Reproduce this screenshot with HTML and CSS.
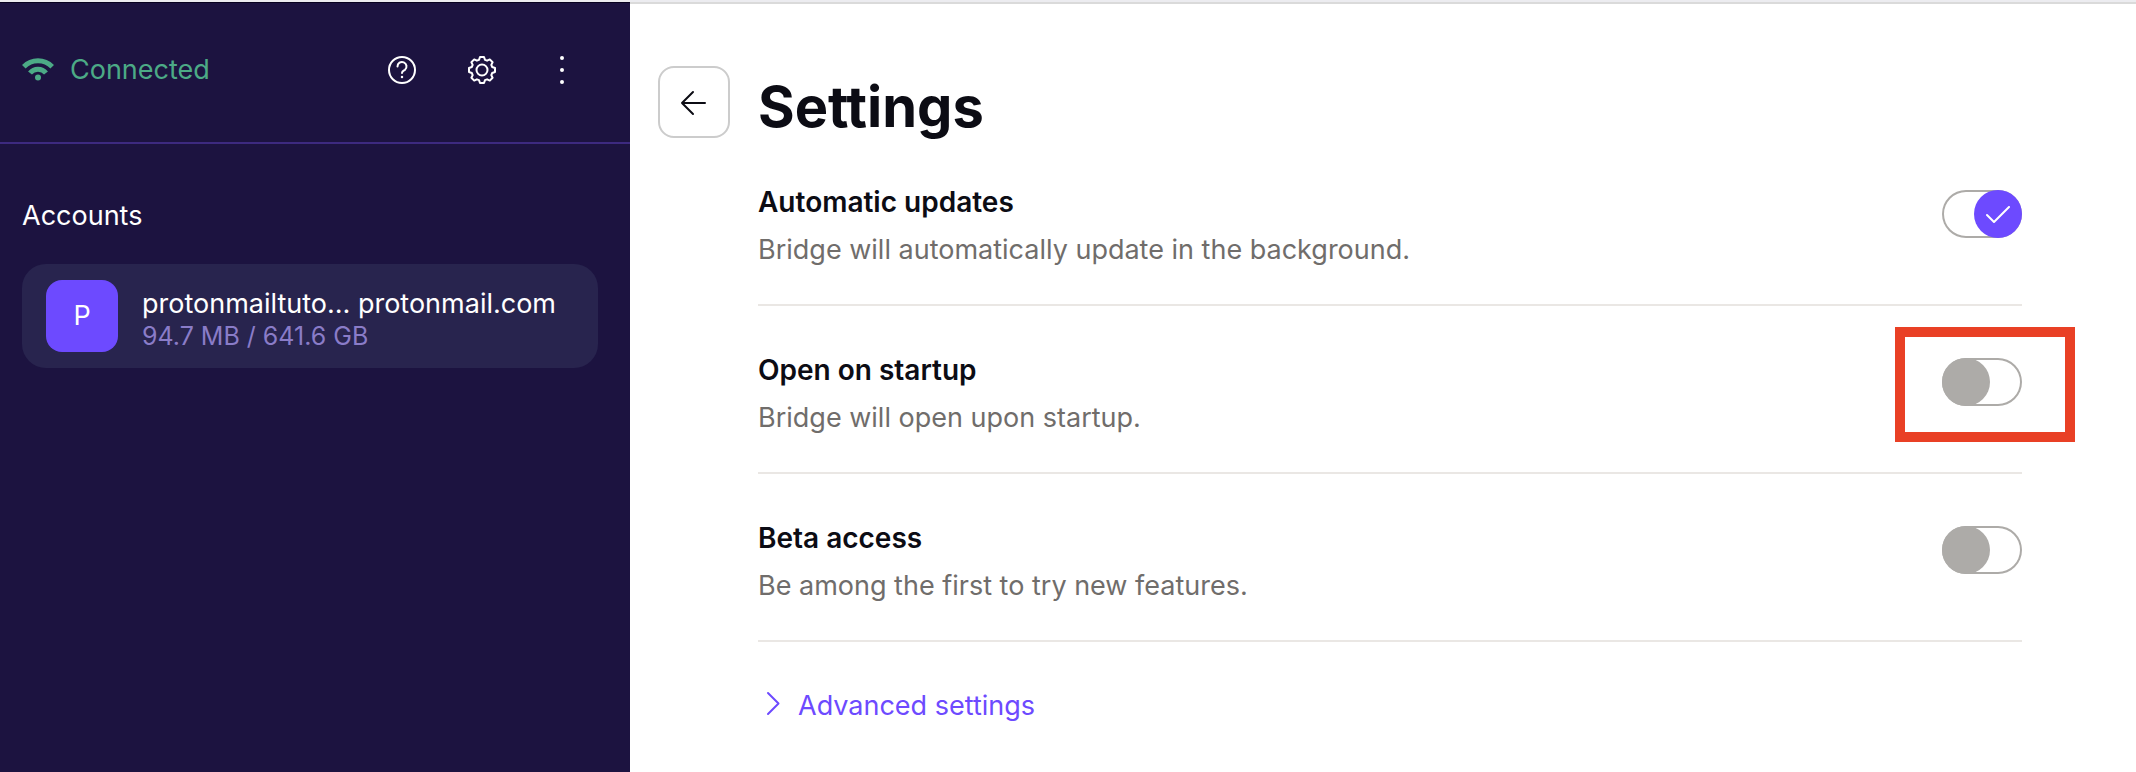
FILE: index.html
```
<!DOCTYPE html>
<html lang="en">
<head>
    <meta charset="UTF-8">
    <meta name="viewport" content="width=device-width, initial-scale=1.0">
    <title>Bridge Settings</title>
    <link rel="stylesheet" href="styles.css">
</head>
<body>
    <aside class="sidebar">
        <header class="status-bar">
            <svg class="wifi" viewBox="0 0 32 24" aria-hidden="true">
                <path d="M1.800 8.700a20 20 0 0 1 28.400 0" stroke-width="5"/>
                <path d="M8 15a10.300 10.300 0 0 1 16 0" stroke-width="5"/>
                <circle cx="16" cy="19.600" r="3"/>
            </svg>
            <span class="status">Connected</span>
            <nav class="actions">
                <button class="icon-button" type="button" aria-label="Help">
                    <svg viewBox="0 0 32 32">
                        <circle cx="16" cy="16" r="13"/>
                        <path d="M11.500 12.500a4.500 4.500 0 1 1 7.500 3.300c-1.800 1.200-3 1.500-3 3.200"/>
                        <path d="M16 23v.01" stroke-width="2.500"/>
                    </svg>
                </button>
                <button class="icon-button" type="button" aria-label="Settings">
                    <svg viewBox="0 0 32 32">
                        <circle cx="16" cy="16" r="5.500"/>
                        <path d="M13 5.800L14 3h4l1 2.800 2.100.9 2.700-1.300 2.800 2.800-1.300 2.700.9 2.100 2.800 1v4l-2.800 1-.9 2.100 1.300 2.700-2.800 2.800-2.700-1.300-2.100.9-1 2.800h-4l-1-2.800-2.100-.9-2.700 1.300-2.800-2.800 1.300-2.700-.9-2.100-2.800-1v-4l2.800-1 .9-2.100-1.300-2.700 2.800-2.800 2.700 1.300z"/>
                    </svg>
                </button>
                <button class="icon-button" type="button" aria-label="More">
                    <svg viewBox="0 0 32 32">
                        <path d="M16 4v.01M16 16v.01M16 28v.01" stroke-width="4"/>
                    </svg>
                </button>
            </nav>
        </header>
        <h2 class="accounts-title">Accounts</h2>
        <button class="account" type="button">
            <span class="avatar">P</span>
            <span class="account-info">
                <span class="account-name">protonmailtuto… protonmail.com</span>
                <span class="account-usage">94.7 MB / 641.6 GB</span>
            </span>
        </button>
    </aside>
    <main class="content">
        <button class="back" type="button" aria-label="Back">
            <svg viewBox="0 0 32 32"><path d="M27 17H4M15 6L4 17l11 11"/></svg>
        </button>
        <div class="settings">
            <h1 class="title">Settings</h1>
            <div class="setting">
                <label class="setting-text" for="updates">
                    <span class="setting-name">Automatic updates</span>
                    <span class="setting-desc">Bridge will automatically update in the background.</span>
                </label>
                <div class="toggle">
                    <input type="checkbox" id="updates" class="toggle-input" checked>
                    <svg class="check" viewBox="0 0 24 18" aria-hidden="true"><path d="M1 9l7 7L23 1"/></svg>
                </div>
            </div>
            <div class="setting">
                <label class="setting-text" for="startup">
                    <span class="setting-name">Open on startup</span>
                    <span class="setting-desc">Bridge will open upon startup.</span>
                </label>
                <div class="toggle highlight">
                    <input type="checkbox" id="startup" class="toggle-input">
                </div>
            </div>
            <div class="setting">
                <label class="setting-text" for="beta">
                    <span class="setting-name">Beta access</span>
                    <span class="setting-desc">Be among the first to try new features.</span>
                </label>
                <div class="toggle">
                    <input type="checkbox" id="beta" class="toggle-input">
                </div>
            </div>
            <a href="#" class="advanced">
                <svg viewBox="0 0 32 32" aria-hidden="true"><path d="M10 3l10.500 10.500L10 24"/></svg>
                Advanced settings
            </a>
        </div>
    </main>
</body>
</html>
```
FILE: styles.css
```
* {
    box-sizing: border-box;
}
body {
    margin: 0;
    min-height: 100vh;
    display: flex;
    border-top: 2px solid #ececf0;
    background-color: #ffffff;
    color: #0c0c14;
    font-family: Inter, sans-serif;
    font-size: 27px;
    line-height: 48px;
}
button {
    font: inherit;
    color: inherit;
    cursor: pointer;
}
svg {
    display: block;
    fill: none;
    stroke: currentColor;
    stroke-width: 2;
    stroke-linecap: round;
    stroke-linejoin: round;
}

/* sidebar */
.sidebar {
    width: 630px;
    flex-shrink: 0;
    border-top: 1px solid #080220;
    background-color: #1c1340;
    color: #ffffff;
}
.status-bar {
    display: flex;
    align-items: center;
    padding: 43px 44px 48px 22px;
    border-bottom: 2px solid #3d2a80;
}
.wifi {
    width: 32px;
    height: 24px;
    color: #4caa86;
    stroke-linecap: butt;
}
.wifi circle {
    fill: currentColor;
    stroke: none;
}
.status {
    margin-left: 16px;
    color: #4caa86;
}
.actions {
    display: flex;
    gap: 32px;
    margin-left: auto;
}
.icon-button {
    padding: 8px;
    border: none;
    background: none;
}
.icon-button svg {
    width: 32px;
    height: 32px;
}
.accounts-title {
    margin: 48px 22px 24px;
    font-size: 27px;
    font-weight: 400;
}
.account {
    display: flex;
    align-items: center;
    gap: 24px;
    width: calc(100% - 54px);
    margin-left: 22px;
    padding: 16px 24px;
    border: none;
    border-radius: 24px;
    background-color: #28244e;
    text-align: left;
}
.avatar {
    width: 72px;
    height: 72px;
    border-radius: 16px;
    background-color: #6d4aff;
    line-height: 72px;
    text-align: center;
}
.account-info {
    display: flex;
    flex-direction: column;
    padding-top: 8px;
    line-height: 32px;
}
.account-usage {
    color: #8a7cc8;
    font-size: 25px;
}

/* settings page */
.content {
    flex: 1;
    display: flex;
    align-items: flex-start;
    gap: 28px;
    padding: 62px 114px 0 28px;
    border-top: 2px solid #dadada;
}
.back {
    width: 72px;
    height: 72px;
    padding: 18px;
    border: 2px solid #cccccc;
    border-radius: 16px;
    background: none;
}
.back svg {
    width: 32px;
    height: 32px;
}
.settings {
    flex: 1;
}
.title {
    margin: 0;
    font-size: 56px;
    line-height: 82px;
}
.setting {
    display: flex;
    justify-content: space-between;
    padding: 40px 0 30px;
    border-bottom: 2px solid #eae7e4;
}
.setting:first-of-type {
    padding-top: 30px;
}
.setting-text {
    display: flex;
    flex-direction: column;
}
.setting-name {
    font-size: 28px;
    font-weight: 600;
}
.setting-desc {
    color: #706d6b;
}
.toggle {
    position: relative;
    width: 80px;
    height: 48px;
    margin-top: 12px;
}
.toggle-input {
    appearance: none;
    display: flex;
    width: 80px;
    height: 48px;
    margin: 0;
    border-radius: 24px;
    box-shadow: inset 0 0 0 2px #adaba8;
    cursor: pointer;
}
.toggle-input::before {
    content: "";
    width: 48px;
    height: 48px;
    border-radius: 50%;
    background-color: #adaba8;
}
.toggle-input:checked {
    justify-content: flex-end;
}
.toggle-input:checked::before {
    background-color: #6d4aff;
}
.check {
    position: absolute;
    top: 16px;
    right: 12px;
    width: 24px;
    height: 18px;
    color: #ffffff;
    pointer-events: none;
}
.highlight::after {
    content: "";
    position: absolute;
    top: -31px;
    right: -53px;
    bottom: -36px;
    left: -47px;
    border: 10px solid #e94025;
    pointer-events: none;
}
.advanced {
    display: inline-flex;
    align-items: center;
    gap: 8px;
    margin-top: 40px;
    color: #6d4aff;
    text-decoration: none;
}
.advanced svg {
    width: 32px;
    height: 32px;
}
```
